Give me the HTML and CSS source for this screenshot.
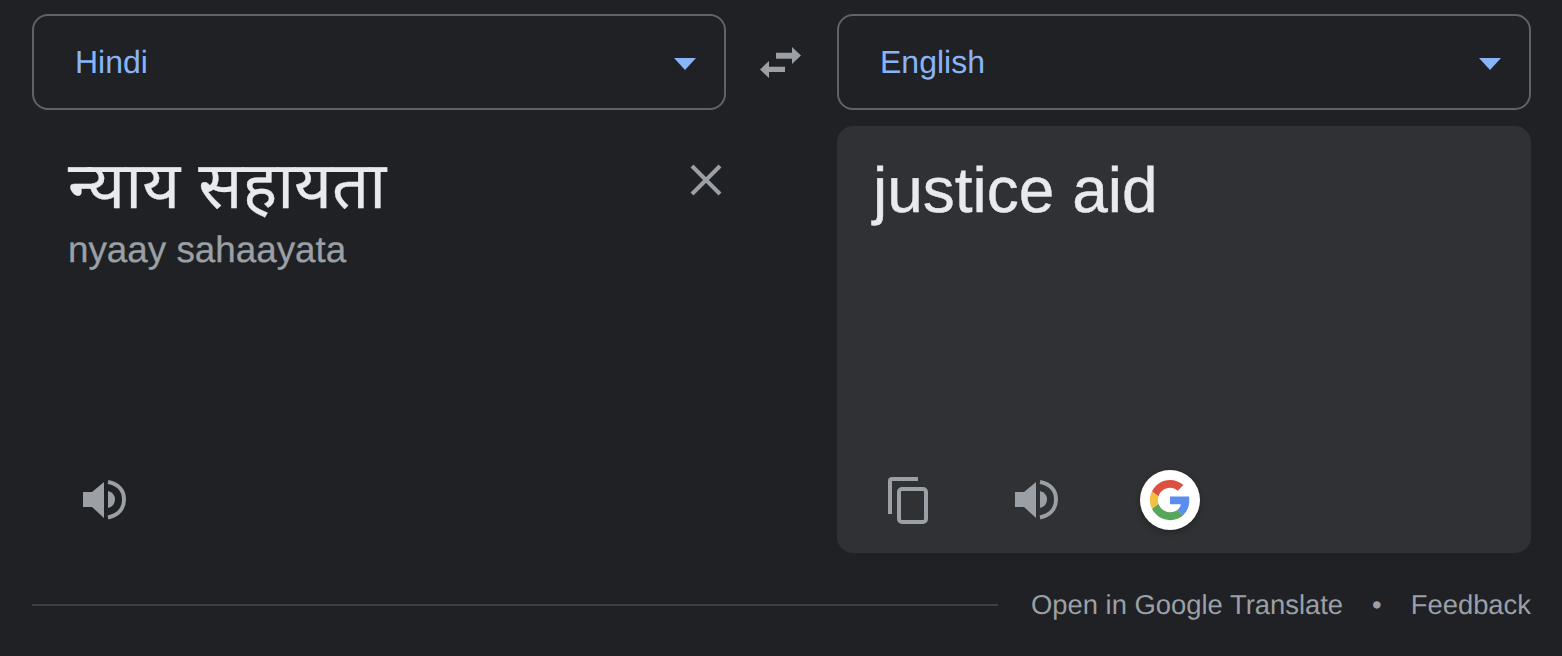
FILE: index.html
```html
<!DOCTYPE html>
<html lang="en">
<head>
    <meta charset="UTF-8">
    <meta name="viewport" content="width=device-width, initial-scale=1.0">
    <title>Translate</title>
    <link rel="stylesheet" href="styles.css">
</head>
<body>
    <div class="lang-row">
        <div class="lang-select">
            <span>Hindi</span>
            <span class="caret"></span>
        </div>
        <div class="swap">
            <svg width="41" height="31" viewBox="0 0 41 31"><path d="M32 0 L41 8.500 L32 17 V11.700 H16 V5.700 H32 Z M9 14 V19.700 H25 V25 H9 V31 L0 22.500 Z" fill="#9aa0a6"/></svg>
        </div>
        <div class="lang-select">
            <span>English</span>
            <span class="caret"></span>
        </div>
    </div>

    <div class="panels">
        <div class="source">
            <div class="source-top">
                <div>
                    <div class="source-text" lang="hi">न्याय सहायता</div>
                    <div class="romanized">nyaay sahaayata</div>
                </div>
                <svg class="clear" width="32" height="32" viewBox="0 0 32 32"><path d="M2 2 L30 30 M30 2 L2 30" stroke="#9aa0a6" stroke-width="4" fill="none"/></svg>
            </div>
            <div class="actions">
                <svg class="speaker" width="43" height="42" viewBox="0 0 43 42"><path d="M0 13 H9 L21 3 V39 L9 28 H0 Z" fill="#9aa0a6"/><path d="M25 12 Q32 14 32 20.500 Q32 27 25 29 Z" fill="#9aa0a6"/><path d="M25 3 C36 5 41 12 41 20.500 C41 29 36 36 25 38.500" stroke="#9aa0a6" stroke-width="4" fill="none"/></svg>
            </div>
        </div>

        <div class="target">
            <div class="target-text">justice aid</div>
            <div class="actions">
                <svg class="copy" width="40" height="47" viewBox="0 0 40 47"><path d="M2 37 V4 Q2 2 4 2 H30" stroke="#9aa0a6" stroke-width="4" fill="none"/><rect x="11" y="12" width="27" height="33" rx="3" stroke="#9aa0a6" stroke-width="4" fill="none"/></svg>
                <svg class="speaker target-speaker" width="43" height="42" viewBox="0 0 43 42"><path d="M0 13 H9 L21 3 V39 L9 28 H0 Z" fill="#9aa0a6"/><path d="M25 12 Q32 14 32 20.500 Q32 27 25 29 Z" fill="#9aa0a6"/><path d="M25 3 C36 5 41 12 41 20.500 C41 29 36 36 25 38.500" stroke="#9aa0a6" stroke-width="4" fill="none"/></svg>
                <div class="g-badge">
                    <svg width="42" height="42" viewBox="0 0 48 48">
                        <path fill="#5a8df0" d="M46.100 24.500c0-1.600-.1-3.100-.4-4.500H24v8.800h12.400c-.5 2.900-2.200 5.300-4.600 6.900l7.200 5.600c4.200-3.900 7.100-9.700 7.100-16.800z"/>
                        <path fill="#58a65c" d="M24 47c6.200 0 11.400-2.100 15.200-5.600L32 35.800c-2 1.400-4.700 2.200-8 2.200-6.100 0-11.300-4.100-13.100-9.700L3.400 34.100C7.200 41.700 15 47 24 47z"/>
                        <path fill="#f2c044" d="M10.900 28.300c-.5-1.400-.7-2.800-.7-4.300s.3-3 .7-4.300l-7.500-5.800C1.900 17 1 20.400 1 24s.9 7 2.400 10.100l7.500-5.800z"/>
                        <path fill="#dc5040" d="M24 10c3.400 0 6.400 1.200 8.800 3.400l6.500-6.500C35.400 3.300 30.200 1 24 1 15 1 7.200 6.300 3.400 13.900l7.500 5.800C12.700 14.100 17.900 10 24 10z"/>
                    </svg>
                </div>
            </div>
        </div>
    </div>

    <footer>
        <div class="rule"></div>
        <span>Open in Google Translate</span>
        <span class="dot">•</span>
        <span>Feedback</span>
    </footer>
</body>
</html>
```

FILE: styles.css
```css
body {
    font-family: "Liberation Sans", Arial, "Noto Sans", sans-serif;
    text-rendering: geometricPrecision;
    background-color: #202124;
    color: #e8eaed;
    margin: 0;
    padding: 14px 31px 0 32px;
    height: 642px;
    overflow: hidden;
}

.lang-row,
.panels {
    display: grid;
    grid-template-columns: 694px 111px 1fr;
}

.lang-row {
    align-items: center;
}

.lang-select {
    height: 96px;
    box-sizing: border-box;
    border: 2px solid #5f6368;
    border-radius: 16px;
    padding: 0 28px 0 41px;
    display: flex;
    align-items: center;
    justify-content: space-between;
    font-size: 32px;
    color: #8ab4f8;
}

.caret {
    width: 0;
    height: 0;
    border-left: 11.5px solid transparent;
    border-right: 11.5px solid transparent;
    border-top: 12px solid #8ab4f8;
    margin-top: 3px;
}

.swap {
    display: flex;
    justify-content: center;
    padding-right: 3px;
}

.panels {
    margin-top: 16px;
    height: 427px;
}

.source {
    grid-column: 1;
    box-sizing: border-box;
    padding: 24px 0 23px 36px;
    display: flex;
    flex-direction: column;
    justify-content: space-between;
}

.source-top {
    display: flex;
    justify-content: space-between;
    align-items: flex-start;
}

.source-text {
    font-size: 65.4px;
    line-height: 72px;
    -webkit-text-stroke: 0.3px #e8eaed;
}

.romanized {
    font-size: 36.8px;
    line-height: 44px;
    margin-top: 6px;
    color: #9aa0a6;
    -webkit-text-stroke: 0.3px #9aa0a6;
}

.clear {
    margin: 14px 4px 0 0;
}

.target {
    grid-column: 3;
    background-color: #303134;
    border-radius: 16px;
    box-sizing: border-box;
    padding: 26px 36px 23px;
    display: flex;
    flex-direction: column;
    justify-content: space-between;
}

.target-text {
    font-size: 64px;
    line-height: 76px;
    -webkit-text-stroke: 0.4px #e8eaed;
}

.actions {
    display: flex;
    align-items: center;
    height: 60px;
    padding-left: 15px;
}

.copy {
    margin-right: 87px;
}

.target-speaker {
    margin-right: 82px;
}

.g-badge {
    width: 60px;
    height: 60px;
    background-color: #fff;
    border-radius: 50%;
    box-shadow: 0 2px 6px rgba(0, 0, 0, 0.3);
    display: flex;
    align-items: center;
    justify-content: center;
}

footer {
    display: flex;
    align-items: center;
    margin-top: 36px;
    font-size: 27.4px;
    color: #9aa0a6;
}

.rule {
    flex: 1;
    height: 2px;
    background-color: #3c4043;
    margin-right: 33px;
}

.dot {
    margin: 0 29px;
}
```
